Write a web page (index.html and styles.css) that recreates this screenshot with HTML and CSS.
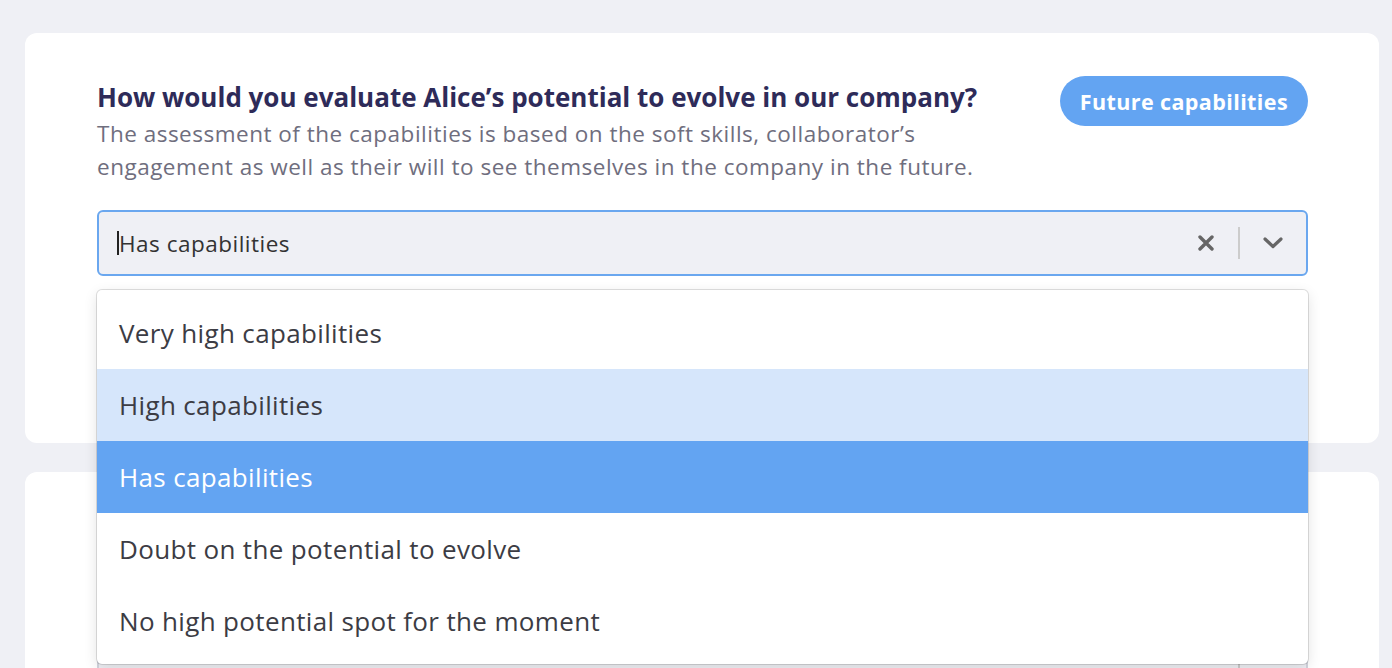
FILE: index.html
```html
<!DOCTYPE html>
<html lang="en">

<head>
    <meta charset="UTF-8" />
    <meta name="viewport" content="width=device-width, initial-scale=1.0" />
    <title>Review - Alice</title>
    <link rel="stylesheet" href="styles.css">
</head>

<body>
    <div class="page">
        <section class="card">
            <div class="card-head">
                <div class="question">
                    <h2 class="question-title">How would you evaluate Alice’s potential to evolve in our company?</h2>
                    <p class="question-desc">The assessment of the capabilities is based on the soft skills, collaborator’s<br>engagement as well as their will to see themselves in the company in the future.</p>
                </div>
                <span class="tag">Future capabilities</span>
            </div>

            <div class="select is-focused">
                <div class="select-control">
                    <div class="select-value"><span class="caret"></span>Has capabilities</div>
                    <div class="select-indicators">
                        <svg class="icon-clear" width="16" height="16" viewBox="0 0 16 16">
                            <path d="M2 2 L14 14 M14 2 L2 14" stroke="#666" stroke-width="3.4" stroke-linecap="round" fill="none" />
                        </svg>
                        <span class="select-sep"></span>
                        <svg class="icon-chevron" width="20" height="12" viewBox="0 0 20 12">
                            <path d="M2 2 L10 9.5 L18 2" stroke="#666" stroke-width="3.2" stroke-linecap="round" stroke-linejoin="round" fill="none" />
                        </svg>
                    </div>
                </div>

                <ul class="select-menu">
                    <li class="option">Very high capabilities</li>
                    <li class="option is-hover">High capabilities</li>
                    <li class="option is-selected">Has capabilities</li>
                    <li class="option">Doubt on the potential to evolve</li>
                    <li class="option">No high potential spot for the moment</li>
                </ul>
            </div>
        </section>

        <!-- next question, mostly hidden under the open menu -->
        <section class="card card-next">
            <div class="select">
                <div class="select-control">
                    <div class="select-value"></div>
                    <div class="select-indicators">
                        <span class="select-sep"></span>
                        <svg class="icon-chevron" width="20" height="12" viewBox="0 0 20 12">
                            <path d="M2 2 L10 9.5 L18 2" stroke="#666" stroke-width="3.2" stroke-linecap="round" stroke-linejoin="round" fill="none" />
                        </svg>
                    </div>
                </div>
            </div>
        </section>
    </div>
</body>

</html>
```

FILE: styles.css
```css
html,
body {
    margin: 0;
    overflow: hidden;
}

body {
    font-family: 'Open Sans', 'Lato', sans-serif;
    background: #eff0f5;
    color: #333;
}

.page {
    padding: 33px 13px 0 25px;
    display: flex;
    flex-direction: column;
    gap: 29px;
}

.card {
    background: #fff;
    border-radius: 12px;
    padding: 43px 71px 167px 72px;
}

.card-next {
    padding-top: 150px;
}

.card-head {
    display: flex;
    justify-content: space-between;
    align-items: flex-start;
}

.question-title {
    margin: 6px 0 0 0;
    font-size: 26px;
    line-height: 30px;
    font-weight: 700;
    color: #2e2b59;
}

.question-desc {
    margin: 5px 0 0 0;
    font-size: 22.5px;
    letter-spacing: 0.5px;
    line-height: 33px;
    color: #6f6e7e;
    white-space: nowrap;
}

.tag {
    height: 50px;
    padding: 0 20px;
    border-radius: 25px;
    background: #63a4f2;
    color: white;
    font-size: 21.5px;
    letter-spacing: 0.4px;
    font-weight: 700;
    display: flex;
    align-items: center;
    white-space: nowrap;
}

.select {
    position: relative;
    margin-top: 27px;
}

.card-next .select {
    margin-top: 0;
}

.select-control {
    height: 66px;
    box-sizing: border-box;
    border: 2px solid #d3d5de;
    border-radius: 6px;
    background: #eff0f5;
    display: flex;
    align-items: center;
}

.select.is-focused .select-control {
    border-color: #6aa7ef;
}

.select-value {
    flex: 1;
    padding-left: 18px;
    font-size: 22.5px;
    letter-spacing: 0.5px;
    color: #333;
    display: flex;
    align-items: center;
}

.caret {
    width: 2px;
    height: 24px;
    background: #222;
}

.select-indicators {
    display: flex;
    align-items: center;
    padding-right: 23px;
}

.select-sep {
    width: 2px;
    height: 32px;
    background: #ccc;
    margin: 0 23px 0 24px;
}

.select-menu {
    position: absolute;
    top: calc(100% + 14px);
    left: 0;
    right: 0;
    margin: 0;
    padding: 7px 0;
    list-style: none;
    background: #fff;
    border-radius: 5px;
    box-shadow: 0 0 0 1px rgba(0, 0, 0, 0.12), 0 4px 14px rgba(0, 0, 0, 0.12);
    z-index: 10;
}

.option {
    height: 72px;
    padding: 0 22px;
    display: flex;
    align-items: center;
    font-size: 26px;
    letter-spacing: 0.35px;
    color: #3c3c44;
}

.option.is-hover {
    background: #d6e6fb;
}

.option.is-selected {
    background: #63a4f2;
    color: white;
}
```
